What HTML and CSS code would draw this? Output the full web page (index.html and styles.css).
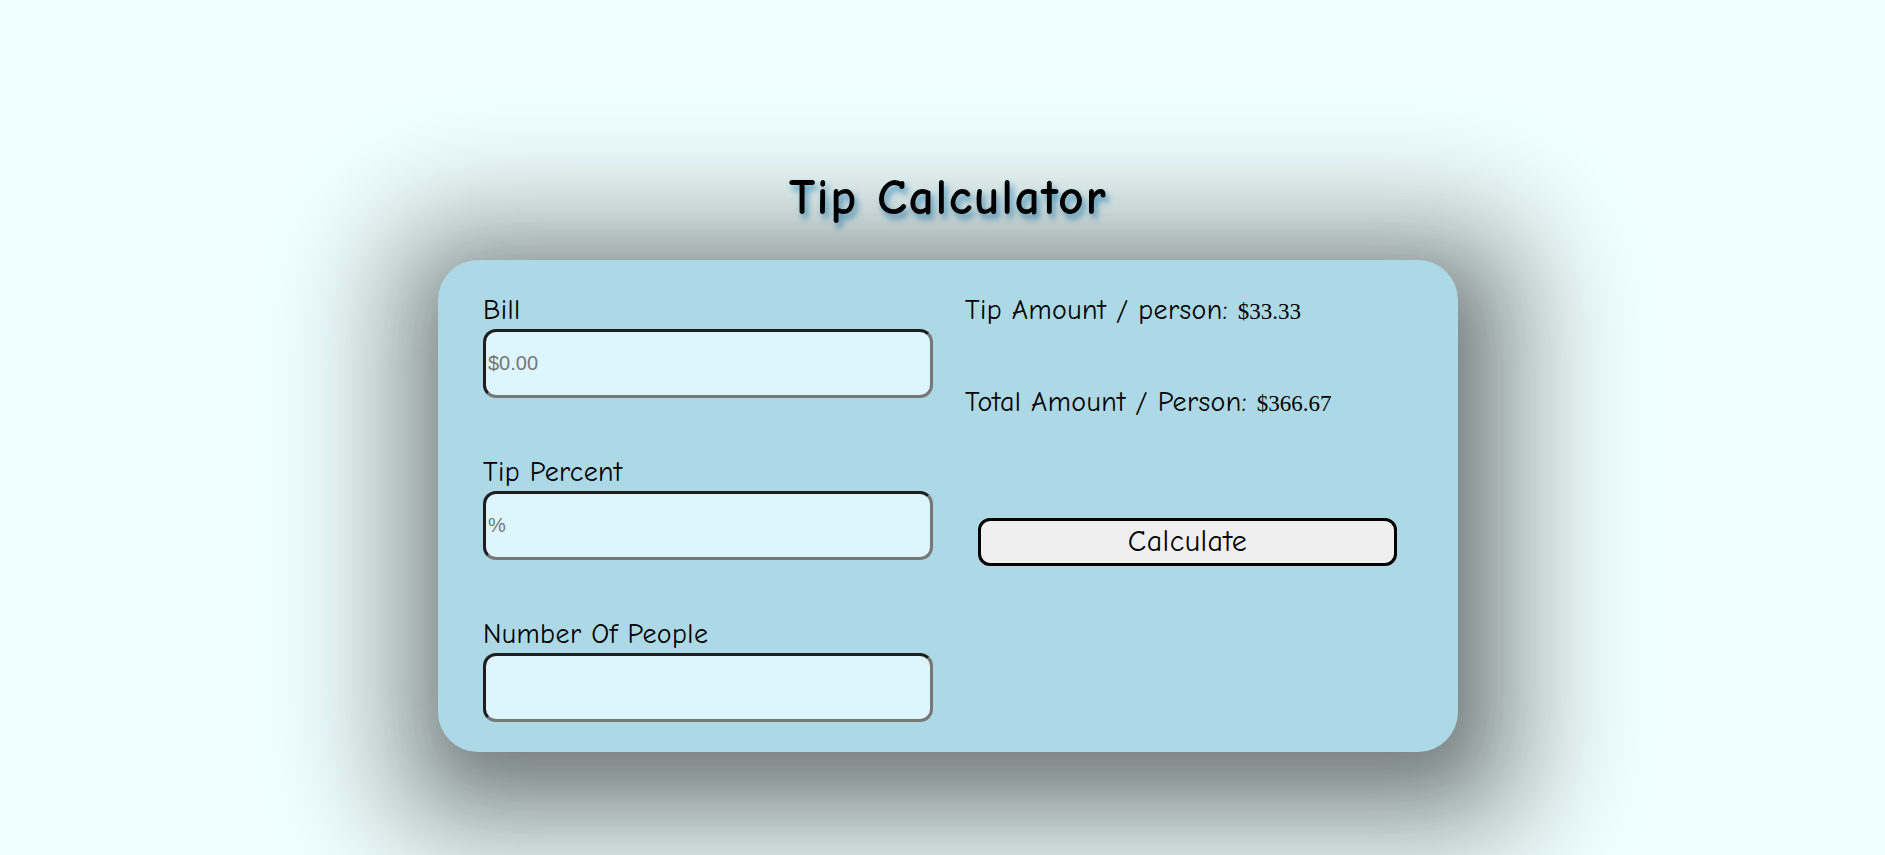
FILE: index.html
```html
<!DOCTYPE html>
<html lang="en">
<head>
<meta charset="utf-8">
<title>Tip Calculator</title>
<link rel="stylesheet" href="styles.css">
</head>
<body>
<main class="page">
  <h1 class="title">Tip Calculator</h1>
  <section class="card">
    <div class="inputs">
      <div class="field">
        <label class="label" for="bill">Bill</label>
        <input class="input" id="bill" type="text" placeholder="$0.00">
      </div>
      <div class="field">
        <label class="label" for="tip">Tip Percent</label>
        <input class="input" id="tip" type="text" placeholder="%">
      </div>
      <div class="field">
        <label class="label" for="people">Number Of People</label>
        <input class="input" id="people" type="text">
      </div>
    </div>
    <div class="results">
      <p class="result">Tip Amount / person: <span class="value">$33.33</span></p>
      <p class="result">Total Amount / Person: <span class="value">$366.67</span></p>
      <button class="calc" type="button">Calculate</button>
    </div>
  </section>
</main>
</body>
</html>
```
FILE: styles.css
```css
html, body {
  margin: 0;
  padding: 0;
}

body {
  background: #f0ffff;
  font-family: "Comic Sans MS", "Comic Neue", "Noto Sans", sans-serif;
  color: #000;
  height: 855px;
  overflow: hidden;
}

.page {
  display: flex;
  flex-direction: column;
  align-items: center;
  padding-top: 168px;
  padding-left: 11px;
}

.title {
  margin: 0;
  font-size: 50px;
  line-height: 60px;
  letter-spacing: 1.5px;
  font-weight: 700;
  text-shadow: 3px 5px 6px #5ab0dc;
}

.card {
  margin-top: 32px;
  width: 1020px;
  box-sizing: border-box;
  background: #add8e6;
  border-radius: 40px;
  padding: 35px 43px 30px 45px;
  display: grid;
  grid-template-columns: 450px 450px;
  column-gap: 32px;
  box-shadow:
    10px 22px 60px 0 rgba(0, 0, 0, 0.22),
    10px 22px 80px 40px rgba(0, 0, 0, 0.24),
    10px 22px 100px 100px rgba(0, 0, 0, 0.17);
}

.inputs {
  display: flex;
  flex-direction: column;
  gap: 59px;
}

.field {
  display: flex;
  flex-direction: column;
  gap: 4px;
}

.label {
  font-size: 28px;
  line-height: 30px;
  letter-spacing: 0.4px;
}

.input {
  box-sizing: border-box;
  width: 450px;
  height: 69px;
  margin: 0;
  padding: 0 2px;
  border: 3px solid;
  border-color: #1e1e1e #777 #777 #1e1e1e;
  border-radius: 13px;
  background: #ddf6fd;
  font-family: "Liberation Sans", Arial, sans-serif;
  font-size: 20px;
  outline: none;
}

.input::placeholder {
  color: #767676;
}

.results {
  display: flex;
  flex-direction: column;
  align-items: flex-start;
}

.result {
  margin: 0 0 60px;
  font-size: 28px;
  line-height: 30px;
  letter-spacing: 0.4px;
}

.value {
  font-family: "Liberation Serif", "Times New Roman", serif;
  font-size: 23px;
  letter-spacing: 0;
}

.calc {
  margin: 39px 0 0 13px;
  width: 419px;
  height: 48px;
  box-sizing: border-box;
  border: 3px solid #000;
  border-radius: 12px;
  background: #efefef;
  font-family: "Comic Sans MS", "Comic Neue", "Noto Sans", sans-serif;
  font-size: 30px;
  letter-spacing: 0.5px;
  line-height: 1;
  color: #000;
  padding: 0;
}
```
